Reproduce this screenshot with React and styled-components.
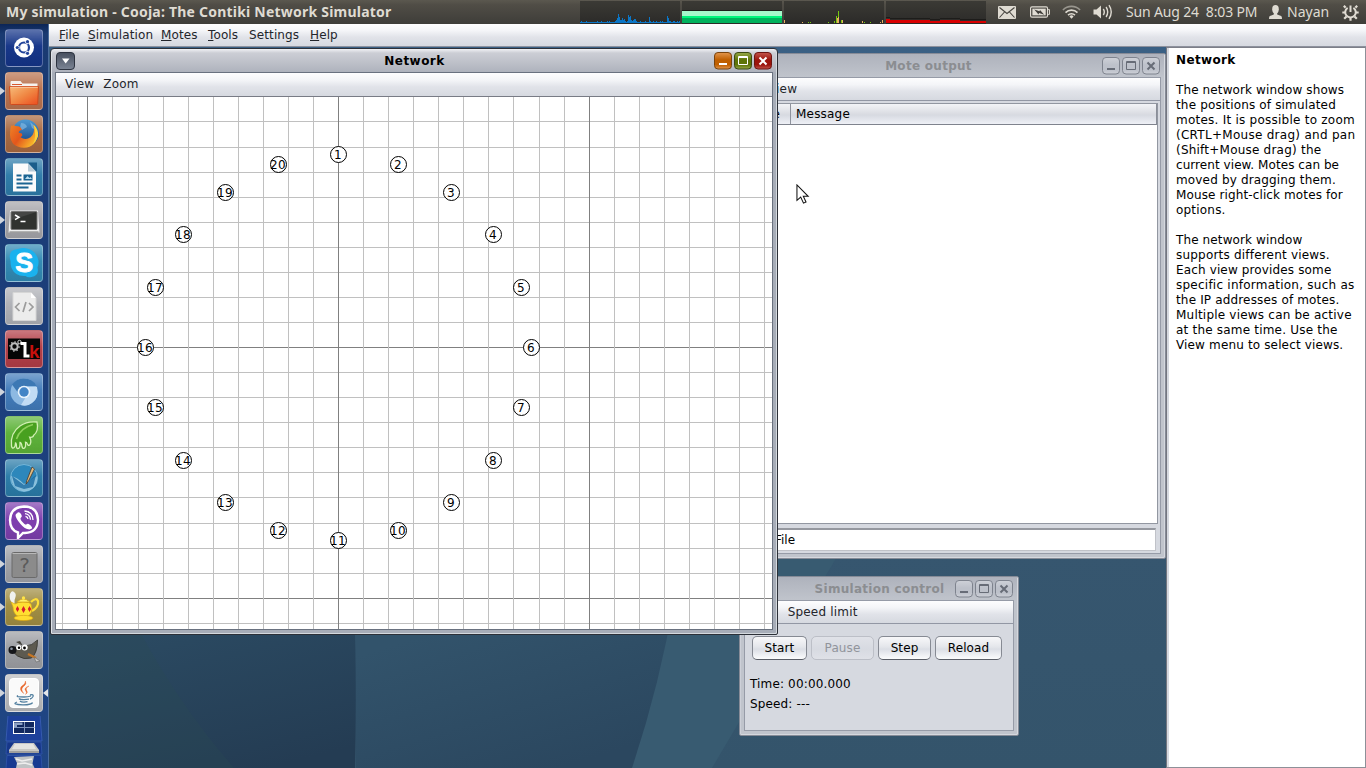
import React from "react";
import styled, { createGlobalStyle, css } from "styled-components";

const Global = createGlobalStyle`
  * { box-sizing: border-box; }
  html, body { margin: 0; padding: 0; overflow: hidden; }
  body { font: 12px/15px "DejaVu Sans", sans-serif; color: #000; }
`;

const barSurface = css`
  background: linear-gradient(#fdfdfe 0%, #f4f5f8 30%, #e1e3e9 60%, #d6d9e0 100%);
`;

const Screen = styled.div`
  width: 1366px;
  height: 768px;
  overflow: hidden;
  display: flex;
  flex-direction: column;
`;

/* ---------- system panel ---------- */
const Panel = styled.header`
  height: 24px;
  flex: none;
  display: flex;
  background: linear-gradient(#5b584f 0%, #504d46 20%, #3e3d39 100%);
  color: #dfdbd2;
  font-family: "Noto Sans", "Open Sans", sans-serif;
`;
const PanelTitle = styled.div`
  width: 580px;
  padding-left: 6px;
  font-weight: 700;
  font-size: 14px;
  line-height: 23px;
  letter-spacing: 0.22px;
  white-space: nowrap;
`;
const Monitors = styled.div`
  display: flex;
  gap: 2px;
  width: 412px;
  padding-top: 1px;
`;
const Graph = styled.svg`
  width: 100px;
  height: 23px;
  display: block;
  background: linear-gradient(#3b3a35, #2b2a28);
`;
const Indicator = styled.div`
  width: ${(p) => p.$w}px;
  height: 24px;
  display: flex;
  align-items: center;
  white-space: nowrap;
  font-size: 14px;
  line-height: 24px;
  letter-spacing: ${(p) => p.$spacing || 0}px;
  svg { display: block; }
`;

/* ---------- body ---------- */
const Body = styled.div`
  flex: 1;
  display: flex;
  min-height: 0;
`;
const Launcher = styled.nav`
  width: 49px;
  flex: none;
  padding: 5px 0 0 0;
  display: flex;
  flex-direction: column;
  gap: 5px;
  overflow: hidden;
  background: linear-gradient(#0c2556 0, #1a3a72 10px, #1c3f7c 50%, #204684 100%);
  border-right: 1px solid #4a6c9c;
`;
const Slot = styled.div`
  height: 38px;
  flex: none;
  display: grid;
  grid-template-columns: 5px 38px 5px;
  align-items: center;
`;
const Pip = styled.span`
  width: 0;
  height: 0;
  border: 4px solid transparent;
  border-width: 4px 5px;
  ${(p) => (p.$left ? "border-left: 5px solid #cfd4dc; border-right: 0;" : "border-right: 5px solid #e4e6ea; border-left: 0;")}
  visibility: ${(p) => (p.$on ? "visible" : "hidden")};
`;
const Tile = styled.svg`
  display: block;
  width: 38px;
  height: 38px;
  border-radius: 4px;
  border: 1px solid rgba(255, 255, 255, 0.28);
  background: linear-gradient(rgba(255, 255, 255, 0.3), rgba(255, 255, 255, 0.02) 45%, rgba(0, 0, 0, 0.08)), ${(p) => p.$bg};
`;
const FoldStack = styled.div`
  margin-top: -1px;
  padding-left: 5px;
  svg { display: block; }
`;

const Application = styled.div`
  flex: 1;
  display: flex;
  flex-direction: column;
  min-width: 0;
`;
const AppMenu = styled.div`
  height: 23px;
  flex: none;
  display: flex;
  padding: 4px 0 0 10px;
  color: #23252b;
  border-bottom: 1px solid #8d919d;
  ${barSurface}
`;
const AppMenuItem = styled.span`
  width: ${(p) => p.$w}px;
  letter-spacing: 0.12px;
  white-space: nowrap;
  u { text-underline-offset: 1px; text-decoration-thickness: 1px; }
`;
const Workspace = styled.div`
  flex: 1;
  display: flex;
  min-height: 0;
`;
const Desktop = styled.main`
  position: relative;
  width: 1117px;
  overflow: hidden;
`;
const Wallpaper = styled.svg`
  display: block;
  width: 1117px;
  height: 721px;
`;
const HelpPane = styled.aside`
  width: 200px;
  border-left: 1px solid #73767f;
  border-top: 1px solid #7c7f88;
  border-right: 1px solid #8d9098;
  border-bottom: 1px solid #8d9098;
  box-shadow: inset 2px 0 0 #d6d9e0;
  background: #fff;
  padding: 5px 0 0 9px;
  white-space: nowrap;
`;
const HelpTitle = styled.h1`
  margin: 0 0 15px;
  font-size: 12px;
  line-height: 15px;
  font-weight: 700;
  letter-spacing: 0.35px;
`;
const HelpText = styled.p`
  margin: 0 0 15px;
`;
const HelpLine = styled.span`
  display: block;
  letter-spacing: ${(p) => p.$spacing}px;
`;

/* ---------- internal frames ---------- */
const Frame = styled.section`
  position: absolute;
  left: ${(p) => p.$x - 49}px;
  top: ${(p) => p.$y - 47}px;
  width: ${(p) => p.$w}px;
  height: ${(p) => p.$h}px;
  display: flex;
  flex-direction: column;
  padding: 0 4px 4px 4px;
  ${(p) =>
    p.$active
      ? css`
          border: 1px solid #2c3038;
          border-radius: 4px 4px 2px 2px;
          background: linear-gradient(#f0f1f4 0, #ccced5 4px, #b0b4be 22px, #a7adb8 24px);
          box-shadow: inset 1px 0 0 #dfe3e8, inset -1px -1px 0 #d4d9de;
        `
      : css`
          border: 1px solid #868b97;
          border-radius: 2px;
          background: linear-gradient(#aeb2bc 0, #bfc3cb 22px, #c0c4cc 24px);
          box-shadow: inset -1px -1px 0 #d5d8de, inset 1px 0 0 #cdd0d8;
        `}
`;
const TitleBar = styled.div`
  height: 23px;
  flex: none;
  display: flex;
  align-items: flex-start;
  justify-content: space-between;
  padding: 3px 1px 0 1px;
`;
const TitleText = styled.div`
  flex: 1;
  text-align: center;
  padding-left: ${(p) => p.$shift}px;
  padding-top: 2px;
  font-weight: 700;
  letter-spacing: ${(p) => (p.$active ? 0.45 : 0.28)}px;
  color: ${(p) => (p.$active ? "#000" : "#8b8d91")};
`;
const TitleButtons = styled.div`
  display: flex;
  gap: 2px;
`;
const TitleButton = styled.svg`
  display: block;
  width: ${(p) => p.$w || 18}px;
  height: 18px;
`;
const Content = styled.div`
  flex: 1;
  min-height: 0;
  display: flex;
  flex-direction: column;
  border: 1px solid ${(p) => (p.$active ? "#69717f" : "#969ba7")};
  background: #d6d9e0;
`;
const FrameMenu = styled.div`
  height: ${(p) => p.$h || 24}px;
  flex: none;
  display: flex;
  padding: 4px 0 0 ${(p) => p.$pad}px;
  gap: 9px;
  color: #23252b;
  letter-spacing: 0.2px;
  border-bottom: 1px solid ${(p) => (p.$active ? "#787b85" : "#9297a4")};
  ${barSurface}
`;
const Canvas = styled.svg`
  display: block;
  width: 716px;
  height: 532px;
  background: #fff;
  shape-rendering: crispEdges;
  circle, text { shape-rendering: auto; }
`;

const Table = styled.div`
  margin: 2px 2px 0 2px;
  height: 421px;
  flex: none;
  background: #fff;
  border: 1px solid #9297a1;
`;
const TableHead = styled.div`
  height: 21px;
  display: flex;
  border-bottom: 1px solid #7f838d;
  border-right: 1px solid #8a8e98;
  line-height: 21px;
  background: linear-gradient(#f3f4f7 0, #dcdee4 45%, #d7dae1 55%, #eef0f6 100%);
`;
const HeadCell = styled.div`
  width: ${(p) => p.$w}px;
  height: 20px;
  letter-spacing: 0.2px;
  text-align: ${(p) => (p.$end ? "right" : "left")};
  padding: 0 ${(p) => (p.$end ? 10 : 0)}px 0 ${(p) => (p.$end ? 0 : 5)}px;
  border-right: ${(p) => (p.$end ? "1px solid #8f939d" : "0")};
`;
const FilterField = styled.div`
  margin: 4px 4px 2px 4px;
  height: 23px;
  border: 1px solid #c0c2c8;
  border-top: 2px solid #95989f;
  background: #fff;
  padding: 3px 0 0 74px;
  white-space: nowrap;
`;

const ControlBody = styled.div`
  padding: 12px 0 0 5px;
`;
const ButtonRow = styled.div`
  display: flex;
  gap: 4px;
  padding-left: 2px;
`;
const PushButton = styled.button`
  width: ${(p) => p.$w}px;
  height: 24px;
  padding: 0;
  font: 12px/15px "DejaVu Sans", sans-serif;
  letter-spacing: 0.1px;
  text-align: center;
  border-radius: 5px;
  border: 1px solid #868a93;
  border-bottom-color: #5a5e67;
  color: #000;
  background: linear-gradient(#f8f8fa 0%, #e4e6eb 45%, #dbdee5 55%, #fbfcfd 100%);
  &:disabled {
    color: #91949b;
    border: 1px solid #bcbfc7;
    background: linear-gradient(#e0e2e8, #d7dae1 55%, #dfe1e7);
  }
`;
const Readout = styled.div`
  padding: 14px 0 0 0;
  line-height: 20px;
  letter-spacing: 0.15px;
`;
const Pointer = styled.svg`
  position: absolute;
  left: 747px;
  top: 137px;
  width: 15px;
  height: 20.600px;
`;

const BLUE = [1,2,1,1,1,1,2,1,1,1,1,1,1,1,1,1,1,2,1,1,1,2,1,1,1,1,1,2,1,2,1,1,1,1,1,2,3,5,9,6,3,3,5,3,4,2,1,2,8,6,7,3,2,3,4,4,2,1,1,1,2,1,1,1,1,2,1,1,1,6,2,1,1,2,1,1,2,1,1,1,2,1,2,1,1,1,1,7,5,2,2,1,1,2,2,1,1,2,1,2];
const DISK = [[0,3,0],[18,1,0],[24,1,1],[26,1,1],[44,1,1],[50,2,1],[52,7,1],[54,12,1],[53,5,0],[54,6,0],[57,3,1],[58,3,0],[78,2,0],[80,1,1],[86,1,1],[96,1,0],[98,3,0]];

function Monitor() {
  return (
    <Monitors>
      <Graph viewBox="0 0 100 23" shapeRendering="crispEdges">
        {BLUE.map((h, i) => <rect key={i} x={i} y={22 - h} width="1" height={h} fill="#0b76c6" />)}
      </Graph>
      <Graph viewBox="0 0 100 23" shapeRendering="crispEdges">
        <rect y="9" width="100" height="1" fill="#1d1c1a" />
        <rect y="10" width="100" height="5" fill="#a5f7cb" />
        <rect y="15" width="100" height="2" fill="#00f57c" />
        <rect y="17" width="100" height="5" fill="#00b15c" />
      </Graph>
      <Graph viewBox="0 0 100 23" shapeRendering="crispEdges">
        {DISK.map(([x, h, g], i) => <rect key={i} x={x} y={22 - h} width="1" height={h} fill={g ? "#74c80e" : "#e8b060"} />)}
      </Graph>
      <Graph viewBox="0 0 100 23" shapeRendering="crispEdges">
        <path d="M0 17h4v-1h-4zM4 17h40v1H4zM44 18h10v1H44zM54 17h20v1H54zM74 18h26v1H74z" fill="#1d1c1a" />
        <path d="M0 18h4v1h40v1h10v-1h20v1h26v2H0z" fill="#d90000" />
      </Graph>
    </Monitors>
  );
}

function Indicators() {
  const ink = "#dfdbd2";
  return (
    <>
      <Indicator $w={6} />
      <Indicator $w={32}>
        <svg width="18" height="13" viewBox="0 0 18 13">
          <rect width="18" height="13" rx="1" fill={ink} />
          <path d="M1.5 1.5l7.5 6 7.5-6M1.5 11.5l5-5.5M16.5 11.5l-5-5.5" fill="none" stroke="#45433e" strokeWidth="1.1" />
        </svg>
      </Indicator>
      <Indicator $w={32}>
        <svg width="20" height="12" viewBox="0 0 21 12">
          <rect x=".6" y=".6" width="17.8" height="10.8" rx="1.5" fill="none" stroke={ink} strokeWidth="1.2" />
          <rect x="2.5" y="2.5" width="14" height="7" fill={ink} />
          <path d="M19 3.5h1.5v5H19" fill="none" stroke={ink} />
          <path d="M4.500 3.500l5.500 1.800.5-1.500 4.500 5-5.500-1.800-.6 1.500z" fill="#3f3d39" />
        </svg>
      </Indicator>
      <Indicator $w={31}>
        <svg width="19" height="14" viewBox="0 0 20 15" fill="none" strokeWidth="1.7">
          <path d="M.8 5.3a13 13 0 0 1 18.4 0" stroke="#99968e" />
          <path d="M3.6 8.2a9 9 0 0 1 12.8 0" stroke={ink} />
          <path d="M6.3 10.9a5.2 5.2 0 0 1 7.4 0" stroke={ink} />
          <path d="M7.8 12.2a3 3 0 0 1 4.4 0L10 14.8z" fill={ink} stroke="none" />
        </svg>
      </Indicator>
      <Indicator $w={33}>
        <svg width="20" height="16" viewBox="0 0 20 16" fill="none" stroke={ink} strokeWidth="1.4">
          <path d="M0.500 5.500h3L8 1.500v13L3.500 10.500h-3z" fill={ink} stroke="none" />
          <path d="M10.300 5q2 3 0 6M13.100 3q3.200 5 0 10M16 1.200q4.500 6.800 0 13.600" />
        </svg>
      </Indicator>
      <Indicator $w={143} $spacing={-0.16}>Sun Aug 24&nbsp; 8:03 PM</Indicator>
      <Indicator $w={18}>
        <svg width="13" height="14" viewBox="0 0 13 14" fill={ink}>
          <ellipse cx="6.500" cy="4.200" rx="3.300" ry="4.200" />
          <path d="M4.800 7h3.400v2.500l4 1.500q.8.500.8 3H0q0-2.500.8-3l4-1.500z" />
        </svg>
      </Indicator>
      <Indicator $w={55}>Nayan</Indicator>
      <Indicator $w={18}>
        <svg width="17" height="17" viewBox="0 0 17 17" fill="none" stroke={ink}>
          <path d="M5.600 3.800a5.300 5.300 0 1 0 5.800 0" strokeWidth="2" />
          <path d="M8.500 1.500v6.500" strokeWidth="2" />
          <path d="M3.600 3.600l-1.800-1.800M13.400 3.600l1.800-1.800M3 8.500H.3M14 8.500h2.700M4.500 12.500l-2.300 2.300M12.500 12.500l2.300 2.300M8.500 14v2.700" strokeWidth="2.200" />
        </svg>
      </Indicator>
    </>
  );
}

const TILES = [
  { bg: "#143488", art: (
    <g fill="none" stroke="#fff"><circle cx="18" cy="17.500" r="10" fill="#fff" stroke="none" />
      <circle cx="18" cy="17.500" r="5" stroke="#22449a" strokeWidth="2.200" />
      <path d="M13.500 17.500H10M20.300 13.600l2-3.300M20.300 21.400l2 3.300" stroke="#fff" strokeWidth="3" />
      <g fill="#22449a" stroke="none"><circle cx="11.300" cy="17.500" r="1.600" /><circle cx="21.500" cy="11.700" r="1.600" /><circle cx="21.500" cy="23.300" r="1.600" /></g></g>) },
  { bg: "#b8714d", left: true, art: (
    <g><path d="M4.500 10V9q0-1 1-1h9l2 2.500h15V14h-27z" fill="#f6f2ee" /><path d="M6 11.500h10" stroke="#d85a30" />
      <path d="M3.500 13.500h29l-.8 17q0 1-1 1H5.300q-1 0-1-1z" fill="url(#folder)" stroke="#d04a1d" /><path d="M4.300 14.300h27.400" stroke="#fbc9a0" /></g>) },
  { bg: "#a8683f", art: (
    <g><circle cx="19.500" cy="17" r="13.500" fill="url(#globe)" /><path d="M15 7q5 0 6 4l-5 3q-3-2-1-7M24 6q5 3 6 8l-4-2z" fill="#8bc0e8" opacity=".6" />
      <path d="M5 9.500q1.500 1 2.500-.5 2 1.500 5 1.200 2 .3 3.500 3.500-3 .5-3.500 2.500 1.500 1.200 3 1 2 2-1 4 5 3.500 10 0 5-4 3-12 4 3.500 4 8.500-1 13.500-13.500 14Q5 31.500 4 19q0-5 1-9.500z" fill="url(#fox)" />
      <path d="M27.500 8.500q5.500 5 4.500 12-1.500 5-5 7.500 4-7 .5-19.500z" fill="#fcd23c" /></g>) },
  { bg: "#2d7ba9", art: (
    <g><path d="M7 4.500h15l8 8v20H7z" fill="#fbfbfb" /><path d="M22 3.500h9v9h-1z" fill="#1b5d8a" /><path d="M22 4.500v8h8z" fill="#b8cbd7" />
      <path d="M10.500 16.500h5M10.500 20.500h5M10.500 24.500h16M10.500 28.500h12" stroke="#1b6492" strokeWidth="2" /><rect x="17.500" y="15.500" width="9" height="6" fill="#1b6492" /><path d="M19 20l2.500-3 2 2 1-1 1.500 2z" fill="#b8dcef" /></g>) },
  { bg: "#a4a4a9", left: true, art: (
    <g><path d="M4 8.500h28l1.500 22h-31z" fill="#eee" /><rect x="5" y="9.500" width="26" height="18" rx="1" fill="#30322f" stroke="#777" />
      <path d="M5.500 18V10h25z" fill="#fff" opacity=".1" /><path d="M9 13l4 2.300-4 2.300M14.500 19.500h5" fill="none" stroke="#fff" strokeWidth="1.500" /><path d="M3.500 30h29" stroke="#777" /></g>) },
  { bg: "#3089b3", art: (
    <g><path d="M12 4q5-1.500 9-.5 9 2 11.500 12 .3 4-1 7 2 8-6 9.500-4 .8-6-1-10 .8-14-8-1-3-1-7Q1 5 12 4z" fill="#1ab2ee" />
      <text x="18.200" y="27" textAnchor="middle" fontFamily="Liberation Sans" fontWeight="700" fontSize="27" fill="#fff" stroke="#fff" strokeWidth=".8">S</text></g>) },
  { bg: "#aeb0b6", art: (
    <g><path d="M7 4.500h18l5 5.500v22.500H7z" fill="#ececec" stroke="#d6d6d6" /><path d="M25 4.500v5.500h5z" fill="#fff" />
      <path d="M13.500 15l-4 4 4 4M23 15l4 4-4 4M20 14l-3 10" fill="none" stroke="#9c9c9c" strokeWidth="1.700" /></g>) },
  { bg: "#b23d46", art: (
    <g><rect x="2" y="7.500" width="32" height="20.500" fill="#050505" /><circle cx="8.500" cy="15.500" r="3.200" fill="none" stroke="#bbb" strokeWidth="2" /><circle cx="8.500" cy="15.500" r="4.600" fill="none" stroke="#bbb" strokeDasharray="1.500 2" strokeWidth="1.200" /><circle cx="13.500" cy="11" r="1.700" fill="none" stroke="#ccc" />
      <path d="M14.500 12.500h4.500v12.500h4.500" fill="none" stroke="#fff" strokeWidth="3" /><text x="23" y="26.500" fontFamily="Liberation Sans" fontWeight="700" fontSize="19" fill="#c8100c">k</text></g>) },
  { bg: "#417bba", left: true, art: (
    <g><circle cx="18" cy="18" r="13.500" fill="#8db9e2" /><path d="M6 10.500Q11 4 18 4.500q9 0 12.500 7.500H18q-5 0-6.500 6z" fill="#3c78b4" /><path d="M31 13q2.500 11-5 16-5 4-11 2l8-13-2-5z" fill="#c2dcf4" />
      <circle cx="18" cy="18" r="6.300" fill="#e8f3fc" /><circle cx="18" cy="18" r="4.700" fill="#4385c6" /></g>) },
  { bg: "#5cb238", art: (
    <g><path d="M31 5q-10-1-17 4Q4 16 5.500 29q.5 2.500 2 2 2-1 2-5 1 0 1 4 .5 2 2 1.500 1.700-1 1.500-6 1.500 0 2 4 .5 2.500 2.300 1.700 1.700-1 1.200-6 1.500 0 2.200 2.500 1.500 1.500 2.500-.5 1.500-3-.5-7 3.500.5 4-2Q33 14 31 5z" fill="#48a01f" stroke="#d2efb4" strokeWidth="1.300" /><path d="M27 7.500Q14 11 10.500 22" fill="none" stroke="#8fcf5c" strokeWidth="1.500" /></g>) },
  { bg: "#2a7ba8", art: (
    <g><circle cx="18" cy="18" r="13.500" fill="#2d87bb" stroke="#76b6d8" /><path d="M5 16q6 1 13 8l13-8q1 10-7 14-10 4-17-5-2-4-2-9z" fill="#a7d2e5" opacity=".75" /><path d="M6 16l12 9 12-10-3 12-9 2-9-3z" fill="#14669d" opacity=".75" /><path d="M26 7l2.500 2-6 12-2.500 3 .8-3.500z" fill="#e0bb80" stroke="#42372d" strokeWidth=".8" /></g>) },
  { bg: "#7d3fae", art: (
    <g><path d="M18 3.500q13.500 0 14 13.500-.5 12.500-13 13h-2l-5 5v-5.500Q4 27 4 17 4.500 4 18 3.500z" fill="#7e3eae" stroke="#fff" strokeWidth="2.400" />
      <path d="M11.500 9.500q2-1 3.500 1.500t0 3.500 1 4 4 3.300q1.500-2 3.500-.3t2.500 3-2.500 2q-5-.5-9-5.500-5-6-5-9 .5-1.500 2-2z" fill="#fff" /><path d="M18.500 8q8 .5 8.500 9M19 10.700q5 .6 5.500 6M19.500 13.300q2.200.5 2.500 2.700" fill="none" stroke="#fff" strokeWidth="1.300" /></g>) },
  { bg: "#a0a2a8", left: true, art: (
    <g><rect x="6" y="6.500" width="25" height="25" rx="1.500" fill="#8b8b8b" stroke="#6a6a6a" /><path d="M6.500 7.500h24" stroke="#b8b8b8" /><text x="18.500" y="26" textAnchor="middle" fontFamily="DejaVu Sans" fontSize="20" fill="#5b5b5b">?</text></g>) },
  { bg: "#a08d42", left: true, art: (
    <g><path d="M6.500 15Q2.500 9 4 5q1.500-4 4-2 2.500 1.500 1.500 5-1.500 3-1 7z" fill="#f0f1ee" /><path d="M25 13q5-5 7-1 1 6-6 10" fill="none" stroke="#ffde36" strokeWidth="2.200" />
      <path d="M5 13l4 2q3-2 8-2 7 0 8 2 3 9-4 13h-8q-6-3-6-10z" fill="#ffdf32" stroke="#d9a516" strokeWidth=".7" /><ellipse cx="17.500" cy="29" rx="9.500" ry="2.600" fill="#ffdc31" stroke="#d9a516" strokeWidth=".7" /><path d="M11 13q6-6 13 0z" fill="#fff06b" stroke="#d9a516" strokeWidth=".7" /><circle cx="17.500" cy="9" r="1.700" fill="#ffe448" />
      <path d="M11.500 17l1.700 3-1.700 3-1.700-3zM17.500 17l2 3.500-2 3.500-2-3.500zM23.500 17l1.700 3-1.700 3-1.700-3z" fill="#d81d2c" /></g>) },
  { bg: "#9c9ea3", art: (
    <g><path d="M31.500 8q0 13-6 18-8 2-14-2-3-3-5-4.500L9 15l5 1q2-1 3-3l2 1q7 0 12.500-6z" fill="#5d5a50" stroke="#2f2e2a" strokeWidth=".8" /><path d="M10 10l4-1 3 5z" fill="#45433c" /><circle cx="6.500" cy="18" r="4" fill="#15161a" /><circle cx="5.500" cy="16.700" r="1.300" fill="#8f98a6" />
      <circle cx="12.700" cy="15.500" r="2.600" fill="#fff" /><circle cx="18.700" cy="15.500" r="3" fill="#fff" /><circle cx="13" cy="15.800" r="1.200" /><circle cx="18.500" cy="16" r="1.400" /><path d="M22 22l8 4" stroke="#c87724" strokeWidth="2.300" /><path d="M28 25l6 4-4 1z" fill="#c9c9c9" stroke="#666" strokeWidth=".6" /></g>) },
  { bg: "#b9babd", left: true, right: true, art: (
    <g><rect x="3.500" y="3.500" width="29" height="29" rx="3.500" fill="#fafafa" stroke="#fff" /><path d="M19.500 6q1.500 3-2 5.500t.3 7q-5.500-4-2-7.500Q19.500 9 19.500 6zM23 11q-5.500 2-3.500 4.500t0 4q3-2 1-4.300Q19 13 23 11z" fill="#e8662a" stroke="#e8662a" strokeWidth=".4" />
      <path d="M12 20.500q-3 1.500 6 1.500 4 0 7-1M13 23.500q1 1.200 5 1.200l5-.6M14 26q1 1.200 4 1.200l3.500-.5M11 27q-6 2.300 6 2.800 9 0 9.500-2.300M24 20q4-1 3 1.500-1 2-3 2.500" fill="none" stroke="#527f9f" strokeWidth="1.300" /></g>) },
];

function LauncherBar() {
  return (
    <Launcher>
      {TILES.map((t, i) => (
        <Slot key={i}>
          <Pip $left $on={t.left} />
          <Tile viewBox="0 0 36 36" $bg={t.bg}>
            {i === 0 && (
              <defs>
                <linearGradient id="folder" x2="1" y2="1"><stop stopColor="#f7bd7c" /><stop offset=".5" stopColor="#f08844" /><stop offset="1" stopColor="#ec4c1e" /></linearGradient>
                <linearGradient id="globe" x2="0" y2="1"><stop stopColor="#4d9ad4" /><stop offset="1" stopColor="#123c7c" /></linearGradient>
                <linearGradient id="fox" x2="1" y2=".6"><stop stopColor="#ef8325" /><stop offset=".5" stopColor="#e3561c" /><stop offset="1" stopColor="#f9bb2c" /></linearGradient>
              </defs>
            )}
            {t.art}
          </Tile>
          <Pip $on={t.right} />
        </Slot>
      ))}
      <FoldStack>
        <svg width="38" height="52" viewBox="0 0 38 52">
          <path d="M3 -1h32l2 26H1z" fill="#1d409b" stroke="#3559ae" />
          <rect x="8.500" y="5.500" width="21" height="12" fill="#12285e" stroke="#fff" />
          <path d="M19.500 6v11.500M9 11.500h20.500" stroke="#8094bb" /><path d="M9 6.500h8.500v2.500H12v2H9z" fill="#8ca0c4" />
          <path d="M2 26h34l1 12H1z" fill="#173789" stroke="#2d51a5" /><path d="M9 27h20l5 7v3H4v-3z" fill="#c9c9c5" /><path d="M10 28h18l3 5H7z" fill="#e5e5e1" /><path d="M4 36h30" stroke="#777" />
          <path d="M2 39.500h34l1 13H1z" fill="#173a91" stroke="#2d51a5" /><path d="M9 41l20-1-1.500 7.500 2 4.500H11l1-5z" fill="#bfc3c5" /><path d="M11 43l6 2 10-2M12 48l8-1 7 2" stroke="#eee" fill="none" strokeWidth="1.500" />
        </svg>
      </FoldStack>
    </Launcher>
  );
}

function WindowButtons({ active }) {
  const kinds = active
    ? [["#e3974f", "#bf5f00", "#79440e"], ["#98a94a", "#5d7408", "#3b4a12"], ["#c4564c", "#9b140c", "#6c1512"]]
    : [0, 1, 2].map(() => ["#ced1d8", "#bdc1ca", "#7e838e"]);
  const ink = active ? "#fff" : "#676c77";
  const glyphs = [
    <path key="m" d="M5 12h8" stroke={ink} strokeWidth="2" />,
    <path key="x" d="M4.500 4.500h9v8h-9z M4 5.500h10" fill="none" stroke={ink} strokeWidth="1" />,
    <path key="c" d="M5.500 5.500l7 7M12.500 5.500l-7 7" stroke={ink} strokeWidth="2" />,
  ];
  return (
    <TitleButtons>
      {kinds.map(([a, b, c], i) => {
        const id = `wb${active ? "a" : "i"}${i}`;
        return (
          <TitleButton key={i} viewBox="0 0 18 18">
            <defs><linearGradient id={id} x2="0" y2="1"><stop stopColor={a} /><stop offset=".45" stopColor={b} /><stop offset=".75" stopColor={b} /><stop offset="1" stopColor={a} /></linearGradient></defs>
            <rect x=".5" y=".5" width="17" height="16.500" rx="3.500" fill={`url(#${id})`} stroke={c} />
            {glyphs[i]}
          </TitleButton>
        );
      })}
    </TitleButtons>
  );
}

const VLINES = [62, 87, 112, 138, 163, 188, 213, 238, 263, 288, 313, 338, 363, 388, 413, 438, 463, 488, 513, 539, 564, 589, 614, 639, 664, 689, 714, 739, 764];
const HLINES = [121, 147, 172, 197, 222, 247, 272, 297, 322, 347, 372, 397, 422, 447, 472, 497, 523, 548, 573, 598, 623];
const MAJOR = new Set([87, 338, 589, 347, 598]);
const MOTES = [[338, 154], [398, 164], [451, 192], [493, 234], [521, 287], [531, 347], [521, 407], [493, 460], [451, 502], [398, 530], [338, 540], [278, 530], [225, 502], [183, 460], [155, 407], [145, 347], [155, 287], [183, 234], [225, 192], [278, 164]];
const tone = (v) => (MAJOR.has(v) ? "#808080" : "#c0c0c0");

function NetworkCanvas() {
  return (
    <Canvas viewBox="56 97 716 532">
      {HLINES.map((y) => <rect key={`h${y}`} x="56" y={y} width="716" height="1" fill={tone(y)} />)}
      {VLINES.map((x) => <rect key={`v${x}`} x={x} y="97" width="1" height="532" fill={tone(x)} />)}
      {MOTES.map(([x, y], i) => (
        <g key={i}>
          <circle cx={x + 0.5} cy={y + 0.5} r="8" fill="#fff" stroke="#000" />
          <text x={x - (i > 8 ? 8 : 4)} y={y + 5} fontSize="12" letterSpacing=".4" fontFamily="DejaVu Sans">{i + 1}</text>
        </g>
      ))}
    </Canvas>
  );
}

const MENUS = [["F", "ile", 29], ["S", "imulation", 73], ["M", "otes", 47], ["T", "ools", 41], ["", "Settings", 61], ["H", "elp", 40]];
const HELP = [
  [["The network window shows", 0.12], ["the positions of simulated", 0.16], ["motes. It is possible to zoom", 0.24], ["(CRTL+Mouse drag) and pan", 0.28], ["(Shift+Mouse drag) the", 0.22], ["current view. Motes can be", 0.06], ["moved by dragging them.", 0.16], ["Mouse right-click motes for", 0.12], ["options.", 0.2]],
  [["The network window", 0.12], ["supports different views.", 0.2], ["Each view provides some", 0.14], ["specific information, such as", 0.24], ["the IP addresses of motes.", 0.16], ["Multiple views can be active", 0.21], ["at the same time. Use the", 0.2], ["View menu to select views.", 0.15]],
];

export default function App() {
  return (
    <Screen>
      <Global />
      <Panel>
        <PanelTitle>My simulation - Cooja: The Contiki Network Simulator</PanelTitle>
        <Monitor />
        <Indicators />
      </Panel>
      <Body>
        <LauncherBar />
        <Application>
          <AppMenu>
            {MENUS.map(([u, rest, w]) => <AppMenuItem key={rest} $w={w}>{u && <u>{u}</u>}{rest}</AppMenuItem>)}
          </AppMenu>
          <Workspace>
            <Desktop>
              <Wallpaper viewBox="49 47 1117 721">
                <defs>
                  <linearGradient id="base" x2="0" y2="1"><stop stopColor="#3a6084" /><stop offset=".7" stopColor="#36566f" /><stop offset="1" stopColor="#34546b" /></linearGradient>
                  <linearGradient id="mid" gradientUnits="userSpaceOnUse" x1="440" y1="630" x2="490" y2="790"><stop stopColor="#32536b" /><stop offset="1" stopColor="#2b475f" /></linearGradient>
                  <linearGradient id="dark" gradientUnits="userSpaceOnUse" x1="180" y1="620" x2="220" y2="780"><stop stopColor="#2b4a62" /><stop offset="1" stopColor="#243c53" /></linearGradient>
                </defs>
                <path d="M49 47h1117v721H49z" fill="url(#base)" />
                <path d="M600 550h241L712 768H600z" fill="#385b71" />
                <path d="M354 600h320q-14 84-42 168H356z" fill="url(#mid)" />
                <path d="M49 600h305q3 80 1 168H49z" fill="url(#dark)" />
                <path d="M49 630h90q40 75 95 138H49z" fill="#2a4a54" opacity=".28" />
              </Wallpaper>

              <Frame $x={690} $y={53} $w={476} $h={506}>
                <TitleBar>
                  <TitleText $shift={59}>Mote output</TitleText>
                  <WindowButtons />
                </TitleBar>
                <Content>
                  <FrameMenu $h={23} $pad={9}><span>File</span><span>Edit</span><span>View</span></FrameMenu>
                  <Table>
                    <TableHead><HeadCell $w={92} $end>Mote</HeadCell><HeadCell>Message</HeadCell></TableHead>
                  </Table>
                  <FilterField>File</FilterField>
                </Content>
              </Frame>

              <Frame $x={739} $y={576} $w={280} $h={160}>
                <TitleBar>
                  <TitleText $shift={59}>Simulation control</TitleText>
                  <WindowButtons />
                </TitleBar>
                <Content>
                  <FrameMenu $h={23} $pad={10}><span>Run</span><span>Speed limit</span></FrameMenu>
                  <ControlBody>
                    <ButtonRow>
                      <PushButton $w={55}>Start</PushButton>
                      <PushButton $w={63} disabled>Pause</PushButton>
                      <PushButton $w={53}>Step</PushButton>
                      <PushButton $w={67}>Reload</PushButton>
                    </ButtonRow>
                    <Readout>Time: 00:00.000<br />Speed: ---</Readout>
                  </ControlBody>
                </Content>
              </Frame>

              <Frame $x={50} $y={48} $w={728} $h={587} $active>
                <TitleBar>
                  <TitleButton $w={19} viewBox="0 0 19 18">
                    <defs><linearGradient id="sys" x2="0" y2="1"><stop stopColor="#474f5e" /><stop offset="1" stopColor="#7c8595" /></linearGradient></defs>
                    <rect x=".5" y=".5" width="18" height="17" rx="3.500" fill="url(#sys)" stroke="#2d3340" />
                    <path d="M6 6.500h7.500L9.700 11.500z" fill="#fff" />
                  </TitleButton>
                  <TitleText $shift={40} $active>Network</TitleText>
                  <WindowButtons active />
                </TitleBar>
                <Content $active>
                  <FrameMenu $pad={9} $active><span>View</span><span>Zoom</span></FrameMenu>
                  <NetworkCanvas />
                </Content>
              </Frame>

              <Pointer viewBox="0 0 16 22">
                <path d="M1 1v16.500l4-3.500 3 6.500 2.700-1.200-2.900-6.200h5.200z" fill="#fff" stroke="#111" strokeWidth="1.100" />
              </Pointer>
            </Desktop>
            <HelpPane>
              <HelpTitle>Network</HelpTitle>
              {HELP.map((lines, i) => (
                <HelpText key={i}>{lines.map(([l, s]) => <HelpLine key={l} $spacing={s}>{l}</HelpLine>)}</HelpText>
              ))}
            </HelpPane>
          </Workspace>
        </Application>
      </Body>
    </Screen>
  );
}
